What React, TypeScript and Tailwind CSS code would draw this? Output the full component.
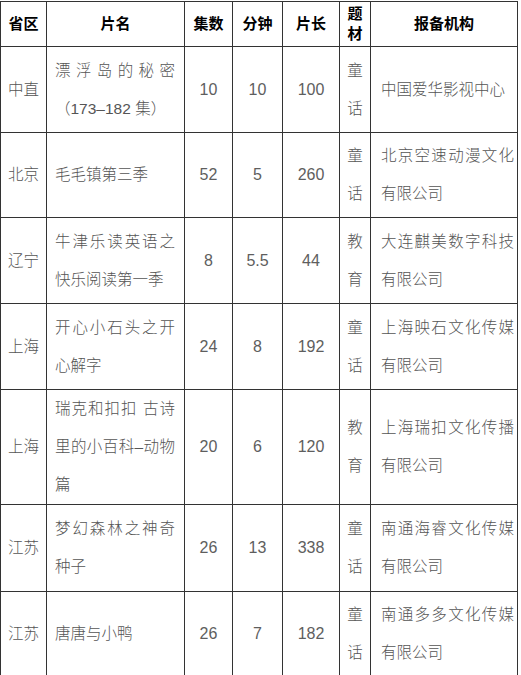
const FONT = "font-['Liberation_Sans','Noto_Sans_CJK_SC',sans-serif]";

type Row = {
  province: string;
  title: string;
  episodes: string;
  minutes: string;
  length: string;
  genre: string;
  org: string;
  h: string;
};

const ROWS: Row[] = [
  { province: "中直", title: "漂浮岛的秘密（173–182 集）", episodes: "10", minutes: "10", length: "100", genre: "童话", org: "中国爱华影视中心", h: "h-[86px]" },
  { province: "北京", title: "毛毛镇第三季", episodes: "52", minutes: "5", length: "260", genre: "童话", org: "北京空速动漫文化有限公司", h: "h-[85px]" },
  { province: "辽宁", title: "牛津乐读英语之快乐阅读第一季", episodes: "8", minutes: "5.5", length: "44", genre: "教育", org: "大连麒美数字科技有限公司", h: "h-[86px]" },
  { province: "上海", title: "开心小石头之开心解字", episodes: "24", minutes: "8", length: "192", genre: "童话", org: "上海映石文化传媒有限公司", h: "h-[86px]" },
  { province: "上海", title: "瑞克和扣扣 古诗里的小百科–动物篇", episodes: "20", minutes: "6", length: "120", genre: "教育", org: "上海瑞扣文化传播有限公司", h: "h-[113px]" },
  { province: "江苏", title: "梦幻森林之神奇种子", episodes: "26", minutes: "13", length: "338", genre: "童话", org: "南通海睿文化传媒有限公司", h: "h-[87px]" },
  { province: "江苏", title: "唐唐与小鸭", episodes: "26", minutes: "7", length: "182", genre: "童话", org: "南通多多文化传媒有限公司", h: "h-[85px]" },
];

const cell = "border border-[#333] align-middle p-0";
const body = "text-[15.5px] leading-[38px] text-[#555] font-light";
const num = "text-[16px] leading-[38px] text-[#5e5e5e] text-center";

export default function App() {
  return (
    <div className={`bg-white w-[521px] h-[675px] overflow-hidden pt-px ${FONT}`}>
      <table className="table-fixed border-collapse w-[517px]">
        <colgroup>
          <col className="w-[46px]" />
          <col className="w-[138px]" />
          <col className="w-[48px]" />
          <col className="w-[50px]" />
          <col className="w-[57px]" />
          <col className="w-[31px]" />
          <col className="w-[147px]" />
        </colgroup>
        <thead>
          <tr className="h-[45px] text-[15px] font-bold text-black text-center">
            <th className={cell}>省区</th>
            <th className={cell}>片名</th>
            <th className={cell}>集数</th>
            <th className={cell}>分钟</th>
            <th className={cell}>片长</th>
            <th className={`${cell} leading-[20px] px-1`}>题材</th>
            <th className={cell}>报备机构</th>
          </tr>
        </thead>
        <tbody>
          {ROWS.map((r, i) => (
            <tr key={i} className={r.h}>
              <td className={`${cell} ${body} text-center`}>{r.province}</td>
              <td className={`${cell} ${body} text-justify pl-[8px] pr-[9px]`}>{r.title}</td>
              <td className={`${cell} ${num}`}>{r.episodes}</td>
              <td className={`${cell} ${num}`}>{r.minutes}</td>
              <td className={`${cell} ${num}`}>{r.length}</td>
              <td className={`${cell} ${body} text-center px-[5px]`}>{r.genre}</td>
              <td className={`${cell} ${body} text-justify pl-[10px] pr-[3px]`}>{r.org}</td>
            </tr>
          ))}
        </tbody>
      </table>
    </div>
  );
}
